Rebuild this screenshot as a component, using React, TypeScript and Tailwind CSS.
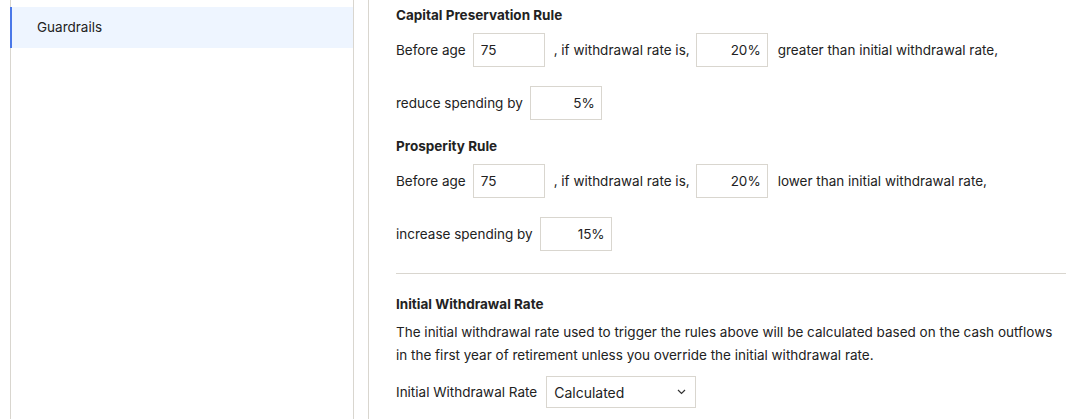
import React from 'react';

type RuleRow = {
  title: string;
  age: string;
  rate: string;
  direction: string;
  action: string;
  amount: string;
};

const rules: Array<RuleRow> = [
  {
    title: 'Capital Preservation Rule',
    age: '75',
    rate: '20%',
    direction: 'greater than initial withdrawal rate,',
    action: 'reduce spending by',
    amount: '5%',
  },
  {
    title: 'Prosperity Rule',
    age: '75',
    rate: '20%',
    direction: 'lower than initial withdrawal rate,',
    action: 'increase spending by',
    amount: '15%',
  },
];

const Field = ({ value, align }: { value: string; align: 'left' | 'right' }) => (
  <input
    type="text"
    defaultValue={value}
    className={`h-[34px] w-[72px] border border-[#d9d6cf] bg-white text-[13.5px] text-[#222] outline-none ${
      align === 'left' ? 'pl-[7px] text-left' : 'pr-[6px] text-right'
    }`}
  />
);

const Rule = ({ rule, first }: { rule: RuleRow; first: boolean }) => (
  <div className={first ? '' : 'mt-[16px]'}>
    <h3 className="text-[13.5px] font-bold leading-[20px] text-[#222]">{rule.title}</h3>
    <div className="mt-[8px] flex h-[34px] items-center">
      <span>Before age</span>
      <span className="ml-[7px]">
        <Field value={rule.age} align="left" />
      </span>
      <span className="ml-[9px]">, if withdrawal rate is,</span>
      <span className="ml-[6px]">
        <Field value={rule.rate} align="right" />
      </span>
      <span className="ml-[10px]">{rule.direction}</span>
    </div>
    <div className="mt-[19px] flex h-[34px] items-center">
      <span>{rule.action}</span>
      <span className="ml-[7px]">
        <Field value={rule.amount} align="right" />
      </span>
    </div>
  </div>
);

const App = (): React.ReactElement => {
  return (
    <div className="flex h-[419px] w-full overflow-hidden bg-white pl-[10px] font-['Inter',sans-serif] text-[13.5px] text-[#222]">
      <aside className="w-[344px] shrink-0 border-x border-[#d9d6cf]">
        <div className="-ml-px mt-[7px] flex h-[41px] items-center border-l-2 border-[#4a78e8] bg-[#eef5ff] pl-[25px] pb-px">
          Guardrails
        </div>
      </aside>
      <main className="ml-[14px] min-w-0 flex-1 border-l border-[#d9d6cf] pl-[27px] pt-[5px]">
        {rules.map((rule, index) => (
          <Rule rule={rule} first={index === 0} key={index} />
        ))}
        <hr className="mt-[22px] border-t border-[#d9d6cf]" />
        <h3 className="mt-[20px] text-[13.5px] font-bold leading-[20px]">Initial Withdrawal Rate</h3>
        <p className="mt-[7px] pr-[4px] leading-[23px]">
          The initial withdrawal rate used to trigger the rules above will be calculated based on the cash outflows in
          the first year of retirement unless you override the initial withdrawal rate.
        </p>
        <div className="mt-[9px] flex items-center">
          <span>Initial Withdrawal Rate</span>
          <div className="relative ml-[9px] flex h-[32px] w-[150px] items-center border border-[#d9d6cf] pl-[7px] text-[14px]">
            <span>Calculated</span>
            <svg
              className="absolute right-[9px] top-[12px]"
              width="9"
              height="6"
              viewBox="0 0 9 6"
              fill="none"
              stroke="#333"
              strokeWidth="1.2"
            >
              <path d="M1 1l3.5 3.5L8 1" />
            </svg>
          </div>
        </div>
      </main>
    </div>
  );
};

export default App;
